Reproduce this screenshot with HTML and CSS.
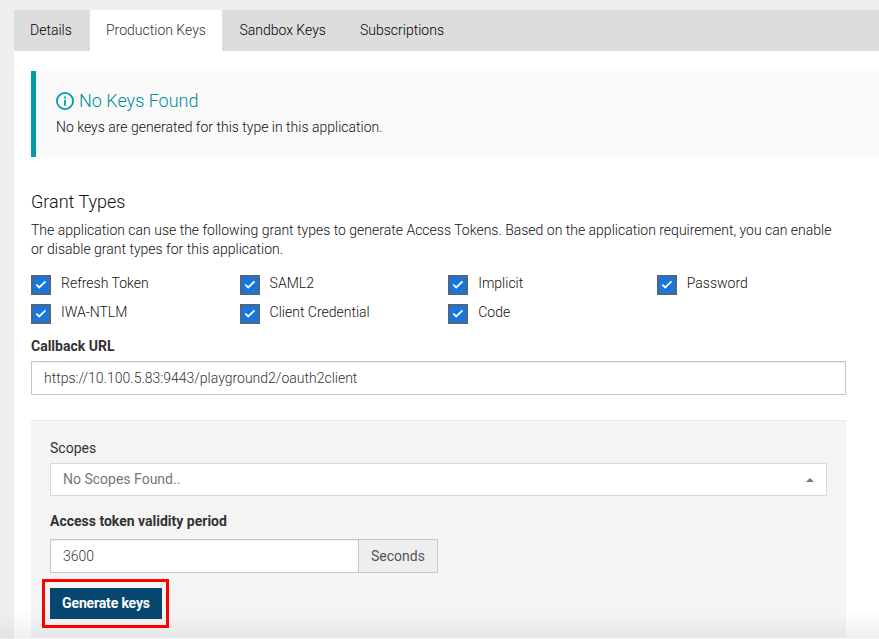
FILE: index.html
```html
<!DOCTYPE html>
<html lang="en">
<head>
<meta charset="utf-8">
<title>Production Keys</title>
<link rel="stylesheet" href="styles.css">
</head>
<body>
<main class="page">
  <nav class="tabs">
    <a class="tab details">Details</a>
    <a class="tab active">Production Keys</a>
    <a class="tab sandbox">Sandbox Keys</a>
    <a class="tab">Subscriptions</a>
  </nav>
  <section class="content">
    <div class="message">
      <h4><svg class="info" viewBox="0 0 18 18"><circle cx="9" cy="9" r="8.1"/><path d="M9 7.8v6M9 4.4v2"/></svg><span>No Keys Found</span></h4>
      <p>No keys are generated for this type in this application.</p>
    </div>
    <h3>Grant Types</h3>
    <p class="description">The application can use the following grant types to generate Access Tokens. Based on the application requirement, you can enable<br>or disable grant types for this application.</p>
    <div class="grants">
      <label><i class="check"><svg viewBox="0 0 16 16"><path d="M3.3 7.6l2.9 2.8 6.3-6"/></svg></i><span>Refresh Token</span></label>
      <label><i class="check"><svg viewBox="0 0 16 16"><path d="M3.3 7.6l2.9 2.8 6.3-6"/></svg></i><span>SAML2</span></label>
      <label><i class="check"><svg viewBox="0 0 16 16"><path d="M3.3 7.6l2.9 2.8 6.3-6"/></svg></i><span>Implicit</span></label>
      <label><i class="check"><svg viewBox="0 0 16 16"><path d="M3.3 7.6l2.9 2.8 6.3-6"/></svg></i><span>Password</span></label>
      <label><i class="check"><svg viewBox="0 0 16 16"><path d="M3.3 7.6l2.9 2.8 6.3-6"/></svg></i><span>IWA-NTLM</span></label>
      <label><i class="check"><svg viewBox="0 0 16 16"><path d="M3.3 7.6l2.9 2.8 6.3-6"/></svg></i><span>Client Credential</span></label>
      <label><i class="check"><svg viewBox="0 0 16 16"><path d="M3.3 7.6l2.9 2.8 6.3-6"/></svg></i><span>Code</span></label>
    </div>
    <div class="label callback-label">Callback URL</div>
    <div class="field callback"><span>https://10.100.5.83:9443/playground2/oauth2client</span></div>
    <div class="panel">
      <div class="label scopes-label">Scopes</div>
      <div class="field select"><span>No Scopes Found..</span><i class="caret"></i></div>
      <div class="label validity-label">Access token validity period</div>
      <div class="group"><div class="field amount"><span>3600</span></div><div class="unit">Seconds</div></div>
      <div class="highlight"><button>Generate keys</button></div>
    </div>
  </section>
</main>
</body>
</html>
```
FILE: styles.css
```css
* { box-sizing: border-box; }
body { margin: 0; height: 639px; overflow: hidden; background: linear-gradient(#efefef 610px, #e4e4e4 638px, #efefef 638px); color: #111; font: 300 14px/20px Roboto, sans-serif; padding: 10px 0 0 14px; }
h3, h4, p { margin: 0; }
.page { background: linear-gradient(#fff 600px, #f0f0f0 628px, #fafafa 628px); height: 629px; }
.tabs { display: flex; height: 41px; background: #ddd; }
.tab { padding: 10px 17px; color: #000; white-space: nowrap; }
.details { width: 76px; padding-left: 16px; }
.active { width: 132px; padding-left: 16px; background: #fff; color: #333; }
.sandbox { width: 121px; padding-left: 17.4px; }
.content { padding: 20px 0 0 17px; }
.message { height: 86px; border-left: 5px solid #009da7; background: #f9f9f9; padding: 19px 20px; }
.message h4 { display: flex; align-items: center; gap: 5px; height: 22px; color: #008f99; font-size: 18px; font-weight: 300; }
.message p { margin-top: 5px; }
.info { width: 18px; height: 18px; fill: none; stroke: #009da7; stroke-width: 1.8; }
h3 { margin-top: 34px; font-size: 18px; line-height: 22px; font-weight: 300; }
.description { margin-top: 8px; line-height: 19px; white-space: nowrap; }
.grants { display: grid; grid-template-columns: repeat(4, 208.6px); grid-auto-rows: 29px; margin-top: 15px; }
.grants label { display: flex; gap: 10px; white-space: nowrap; }
.grants span { line-height: 18px; }
.check { width: 20px; height: 20px; margin-top: 1px; border: 2px solid #50667c; background: #1976dc; }
.check svg { display: block; width: 16px; height: 16px; fill: none; stroke: #fff; stroke-width: 1.8; }
.label { font-weight: 700; line-height: 20px; color: #333; }
.callback-label { margin-top: 4px; }
.field { height: 34px; border: 1px solid #c8c8c8; background: #fff; box-shadow: inset 0 1px 1px rgba(0, 0, 0, .07); padding: 6px 12px; display: flex; align-items: center; justify-content: space-between; color: #333; }
.callback { width: 815px; margin-top: 5px; }
.panel { width: 815px; height: 218px; margin-top: 25px; background: linear-gradient(#f4f4f4 190px, #e6e6e6 218px); border: 1px solid #eaeaea; border-width: 1px 0 0; padding: 17px 19px 0; }
.scopes-label { font-weight: 400; }
.select { width: 777px; height: 33px; margin-top: 5px; padding: 5px 12px 6px; border-color: #dadada; box-shadow: none; color: #777; font-weight: 400; }
.caret { border: 4px solid transparent; border-top: 0; border-bottom-color: #777; margin-top: 2px; }
.validity-label { margin-top: 15px; }
.group { display: flex; margin-top: 8px; }
.amount { width: 309px; }
.unit { width: 79px; border: 1px solid #c8c8c8; border-left: 0; background: #eee; color: #555; text-align: center; line-height: 32px; font-weight: 400; }
.highlight { width: 127px; height: 49px; margin: 6px 0 0 -8px; border: 3px solid #f00; padding: 6px 5px; }
button { display: block; width: 112px; height: 31px; border: 0; padding: 0 0 1px; background: #06466f; color: #fff; font: 700 14px Roboto, sans-serif; letter-spacing: -.15px; }
```
